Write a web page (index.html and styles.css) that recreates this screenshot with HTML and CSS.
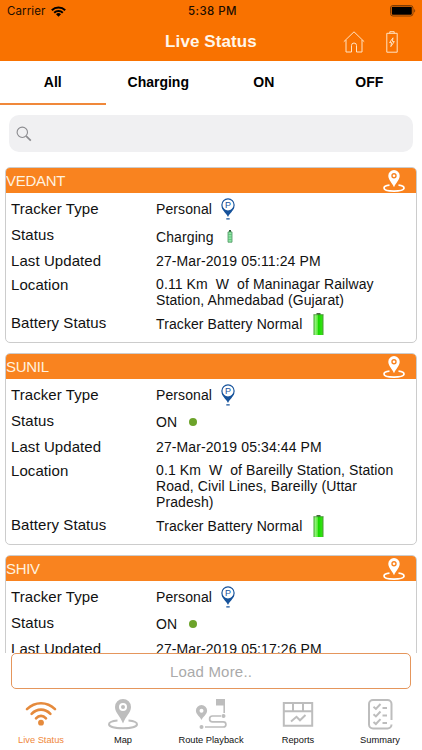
FILE: index.html
```html
<!DOCTYPE html>
<html lang="en">
<head>
    <meta charset="UTF-8">
    <meta name="viewport" content="width=device-width, initial-scale=1.0">
    <title>Live Status</title>
    <link rel="stylesheet" href="styles.css">
</head>
<body>
    <!-- Shared icons -->
    <svg class="sprite" aria-hidden="true">
        <symbol id="locate" viewBox="0 0 22 22">
            <path d="M6.500 15.200C3.200 15.500 1 16.600 1 18c0 1.900 4.300 3.100 10 3.100s10-1.200 10-3.100c0-1.400-2.200-2.500-5.500-2.800" fill="none" stroke="#fff" stroke-width="1.700"/>
            <path fill="#fff" fill-rule="evenodd" d="M11 0a5.700 5.700 0 0 0-5.700 5.700C5.300 9.800 9 12.500 11 17.200c2-4.700 5.700-7.400 5.700-11.500A5.700 5.700 0 0 0 11 0zm0 3a2.700 2.700 0 1 1 0 5.400A2.700 2.700 0 0 1 11 3z"/>
            <circle cx="11" cy="5.700" r="1.300" fill="#fff"/>
        </symbol>
        <symbol id="personal" viewBox="0 0 14 22">
            <path fill="#17539b" d="M.8 9.500C2 13.400 5 14.800 7 19c2-4.200 5-5.600 6.200-9.500z"/>
            <circle cx="7" cy="6.900" r="6.100" fill="#fff" stroke="#17539b" stroke-width="1.200"/>
            <path d="M5.300 20.900h3.400" stroke="#17539b" stroke-width="1.300"/>
        </symbol>
        <linearGradient id="green">
            <stop offset="0" stop-color="#3fa52c"/>
            <stop offset=".2" stop-color="#8df276"/>
            <stop offset=".4" stop-color="#5bea3b"/>
            <stop offset=".5" stop-color="#18d900"/>
            <stop offset=".8" stop-color="#30e011"/>
            <stop offset="1" stop-color="#4a9c34"/>
        </linearGradient>
        <symbol id="battery" viewBox="0 0 11 22">
            <path d="M3.500 0h4v2h-4z" fill="#4d6844"/>
            <path d="M.5 1.500h10V22H.5z" fill="url(#green)"/>
            <path d="M.5 1.700h10" stroke="#3a7a2d" stroke-width=".6"/>
        </symbol>
        <symbol id="charging" viewBox="0 0 6 13">
            <path d="M2 0h2v2H2z" fill="#315c3c"/>
            <path d="M1 1.900h4v10.300H1z" fill="#8de6a4" stroke="#4d9360" stroke-width=".8"/>
            <path d="M1.300 4.500h3.400M1.300 7h3.400M1.300 9.500h3.400" stroke="#4fae69" stroke-width=".6"/>
        </symbol>
    </svg>

    <div class="app">
        <header class="header">
            <div class="status-bar">
                <div class="carrier">
                    <span>Carrier</span>
                    <svg width="15" height="11" viewBox="0 0 15 11" fill="none" stroke="#000" stroke-width="2">
                        <path d="M.8 4.200a9.600 9.600 0 0 1 13.400 0M3.200 6.700a6.200 6.200 0 0 1 8.600 0"/>
                        <path fill="#000" stroke="none" d="M7.500 10.800 5 8.300a3.600 3.600 0 0 1 5 0z"/>
                    </svg>
                </div>
                <div class="time">5:38 PM</div>
                <svg class="phone-battery" width="26" height="12" viewBox="0 0 26 12">
                    <rect x=".5" y=".5" width="22.500" height="10.500" rx="2.500" fill="none" stroke="#7f3d05"/>
                    <rect x="1.800" y="1.800" width="20" height="7.900" rx="1" fill="#000"/>
                    <path d="M24.200 4c1.300.4 1.300 3.200 0 3.600z" fill="#7f3d05"/>
                </svg>
            </div>
            <div class="title-bar">
                <h1>Live Status</h1>
                <div class="actions">
                    <svg width="22" height="22" viewBox="0 0 22 22" fill="none" stroke="#ffe3c4" stroke-width="1">
                        <path d="M.8 10.700 11 .8l10.200 9.900M3 9v12h5.500v-6.500a2.500 2.500 0 0 1 5 0V21H19V9"/>
                    </svg>
                    <svg width="12" height="22" viewBox="0 0 12 22" fill="none" stroke="#ffe3c4" stroke-width="1">
                        <path d="M.8 2.300h10.400v18.900H.8zM3.800 2.300V.7h4.400v1.600M7 6.800l-3.400 4.800h2l-.8 4 3.500-5H6.400z"/>
                    </svg>
                </div>
            </div>
        </header>

        <nav class="tabs">
            <div class="tab active">All</div>
            <div class="tab">Charging</div>
            <div class="tab">ON</div>
            <div class="tab">OFF</div>
        </nav>

        <div class="search">
            <svg width="16" height="16" viewBox="0 0 16 16" fill="none" stroke="#8b8b8f">
                <circle cx="6.300" cy="6.300" r="5.200" stroke-width="1.100"/>
                <path d="m10.200 10.200 4.600 4.400" stroke-width="1.700"/>
            </svg>
        </div>

        <main class="list">
            <section class="card">
                <div class="card-header">
                    <span>VEDANT</span>
                    <svg width="22" height="22"><use href="#locate"/></svg>
                </div>
                <div class="row type">
                    <div class="label">Tracker Type</div>
                    <div class="value">Personal <div class="pin"><svg width="14" height="22"><use href="#personal"/></svg><span>P</span></div></div>
                </div>
                <div class="row status">
                    <div class="label">Status</div>
                    <div class="value">Charging <svg width="6" height="13"><use href="#charging"/></svg></div>
                </div>
                <div class="row updated">
                    <div class="label">Last Updated</div>
                    <div class="value">27-Mar-2019 05:11:24 PM</div>
                </div>
                <div class="row location">
                    <div class="label">Location</div>
                    <div class="value">0.11 Km&nbsp; W&nbsp; of Maninagar Railway<br>Station, Ahmedabad (Gujarat)</div>
                </div>
                <div class="row battery">
                    <div class="label">Battery Status</div>
                    <div class="value">Tracker Battery Normal <svg width="11" height="22"><use href="#battery"/></svg></div>
                </div>
            </section>

            <section class="card">
                <div class="card-header">
                    <span>SUNIL</span>
                    <svg width="22" height="22"><use href="#locate"/></svg>
                </div>
                <div class="row type">
                    <div class="label">Tracker Type</div>
                    <div class="value">Personal <div class="pin"><svg width="14" height="22"><use href="#personal"/></svg><span>P</span></div></div>
                </div>
                <div class="row status">
                    <div class="label">Status</div>
                    <div class="value on">ON <span class="dot"></span></div>
                </div>
                <div class="row updated">
                    <div class="label">Last Updated</div>
                    <div class="value">27-Mar-2019 05:34:44 PM</div>
                </div>
                <div class="row location">
                    <div class="label">Location</div>
                    <div class="value">0.1 Km&nbsp; W&nbsp; of Bareilly Station, Station<br>Road, Civil Lines, Bareilly (Uttar<br>Pradesh)</div>
                </div>
                <div class="row battery">
                    <div class="label">Battery Status</div>
                    <div class="value">Tracker Battery Normal <svg width="11" height="22"><use href="#battery"/></svg></div>
                </div>
            </section>

            <section class="card">
                <div class="card-header">
                    <span>SHIV</span>
                    <svg width="22" height="22"><use href="#locate"/></svg>
                </div>
                <div class="row type">
                    <div class="label">Tracker Type</div>
                    <div class="value">Personal <div class="pin"><svg width="14" height="22"><use href="#personal"/></svg><span>P</span></div></div>
                </div>
                <div class="row status">
                    <div class="label">Status</div>
                    <div class="value on">ON <span class="dot"></span></div>
                </div>
                <div class="row updated">
                    <div class="label">Last Updated</div>
                    <div class="value">27-Mar-2019 05:17:26 PM</div>
                </div>
            </section>
        </main>

        <button class="load-more">Load More..</button>

        <nav class="bottom-nav">
            <div class="nav-item active">
                <svg width="32" height="32" viewBox="0 0 32 32" fill="none" stroke="#e58a3c" stroke-width="2.600" stroke-linecap="round">
                    <path d="M2 11.200c8-8 20-8 28 0M6.600 15.800c5.400-5.600 13.400-5.600 18.800 0M11 20.300c3-3.300 7-3.300 10 0"/>
                    <circle cx="16" cy="24.700" r="2.900" fill="#e58a3c" stroke="none"/>
                </svg>
                <span>Live Status</span>
            </div>
            <div class="nav-item">
                <svg width="32" height="32" viewBox="0 0 32 32" fill="#bdbdbd">
                    <path d="M10.500 22.400C5 22.900 2 24.300 2 26.200c0 2.500 6 4 14 4s14-1.500 14-4c0-1.900-3-3.300-8.500-3.800" fill="none" stroke="#bdbdbd" stroke-width="2"/>
                    <path fill-rule="evenodd" d="M16 1a8 8 0 0 0-8 8c0 5.800 5.300 9 8 16.500C18.700 18 24 14.800 24 9a8 8 0 0 0-8-8zm0 3.900a4 4 0 1 1 0 8 4 4 0 0 1 0-8z"/>
                    <circle cx="16" cy="8.900" r="2"/>
                </svg>
                <span>Map</span>
            </div>
            <div class="nav-item">
                <svg width="32" height="32" viewBox="0 0 32 32" fill="#bdbdbd">
                    <path fill-rule="evenodd" d="M6.500 7A5.600 5.600 0 0 0 .9 12.600c0 4.100 4 5.800 5.600 9.400 1.600-3.600 5.600-5.300 5.600-9.400A5.600 5.600 0 0 0 6.500 7zm0 3.700a2 2 0 1 1 0 4 2 2 0 0 1 0-4z"/>
                    <path d="M21 1h9v14h-1.600V7.500H21z"/>
                    <circle cx="6.500" cy="29" r="2"/>
                    <circle cx="28.500" cy="18" r="2"/>
                    <path d="M10 29h18.300a2.500 2.500 0 0 0 0-5.200H17.500a2.900 2.900 0 0 1 0-5.800H26" fill="none" stroke="#bdbdbd" stroke-width="1.700"/>
                </svg>
                <span>Route Playback</span>
            </div>
            <div class="nav-item">
                <svg width="32" height="32" viewBox="0 0 32 32" fill="none" stroke="#bdbdbd" stroke-width="2">
                    <path d="M1.800 5h28.400v22.800H1.800zM1.800 13.300h28.400M11 5v8.300M21 5v8.300"/>
                    <path d="m9 23.500 5.500-4.700 3.500 3.500 5.500-5.200"/>
                </svg>
                <span>Reports</span>
            </div>
            <div class="nav-item">
                <svg width="32" height="32" viewBox="0 0 32 32" fill="none" stroke="#bdbdbd" stroke-width="2">
                    <path d="M27.500 22V6a4 4 0 0 0-4-4H9a4 4 0 0 0-4 4v20.500a4 4 0 0 0 4 4h14.500a4 4 0 0 0 4-4"/>
                    <path d="m9.500 8.800 2.400 2.100L16.500 6M9.500 16.300l2.400 2.100 4.600-4.900M9.500 23.900l2.400 2.100 4.600-4.900M18.500 10H23M18.500 17.500H23M18.500 25H23"/>
                </svg>
                <span>Summary</span>
            </div>
        </nav>
    </div>
</body>
</html>
```
FILE: styles.css
```css
* {
    box-sizing: border-box;
}

body {
    margin: 0;
    background-color: #fff;
    color: #111;
    font-family: "Liberation Sans", Arial, sans-serif;
}

svg {
    display: block;
    flex-shrink: 0;
}

.sprite {
    position: absolute;
    width: 0;
    height: 0;
}

.app {
    width: 422px;
    height: 750px;
    display: flex;
    flex-direction: column;
    overflow: hidden;
}

/* Header */
.header {
    height: 61px;
    flex-shrink: 0;
    background-color: #f97200;
}

.status-bar {
    height: 22px;
    padding: 0 6px 0 7px;
    display: grid;
    grid-template-columns: 1fr auto 1fr;
    align-items: center;
    font-family: Inter, sans-serif;
    font-size: 11.5px;
    color: #1c0d00;
}

.carrier {
    display: flex;
    align-items: center;
    gap: 6px;
    letter-spacing: 0.1px;
}

.time {
    padding-left: 2px;
    font-weight: 500;
    letter-spacing: 0.4px;
}

.phone-battery {
    justify-self: end;
}

.title-bar {
    height: 39px;
    padding: 0 24px;
    display: grid;
    grid-template-columns: 1fr auto 1fr;
    align-items: center;
}

h1 {
    grid-column: 2;
    margin: 0;
    font-size: 17px;
    letter-spacing: 0.1px;
    color: #fff6ea;
}

.actions {
    display: flex;
    justify-content: flex-end;
    gap: 21px;
}

/* Tabs */
.tabs {
    height: 44px;
    flex-shrink: 0;
    display: grid;
    grid-template-columns: repeat(4, 1fr);
}

.tab {
    padding-top: 13px;
    font-size: 14px;
    line-height: 17px;
    font-weight: bold;
    text-align: center;
    color: #000;
}

.tab.active {
    border-bottom: 2px solid #f0883a;
}

.search {
    height: 37px;
    flex-shrink: 0;
    margin: 10px 9px 0;
    padding: 0 7px;
    display: flex;
    align-items: center;
    background-color: #f0f0f2;
    border-radius: 10px;
}

/* Tracker cards */
.list {
    flex: 1;
    min-height: 0;
    padding: 15px 5px 0;
    overflow: hidden;
}

.card {
    margin-bottom: 10px;
    padding-bottom: 2px;
    border: 1px solid #ccc;
    border-radius: 5px;
    overflow: hidden;
}

.card-header {
    height: 25px;
    padding-right: 11px;
    display: flex;
    align-items: center;
    justify-content: space-between;
    background-color: #f9831f;
    color: #fff1df;
    font-size: 15px;
    letter-spacing: -0.3px;
}

.row {
    padding-left: 5px;
    display: grid;
    grid-template-columns: 145px 1fr;
    align-items: center;
}

.label {
    font-size: 15px;
    line-height: 18px;
    letter-spacing: 0.08px;
}

.value {
    display: flex;
    align-items: center;
    font-size: 14px;
    line-height: 16px;
    letter-spacing: 0.1px;
}

.type {
    height: 31px;
}

.type .value {
    gap: 9px;
}

/* Letter inside the tracker type pin */
.pin {
    position: relative;
}

.pin span {
    position: absolute;
    top: 2px;
    left: 0;
    width: 14px;
    font-size: 9px;
    line-height: 10px;
    text-align: center;
    color: #17539b;
}

.status {
    height: 25px;
}

.status .label {
    padding-bottom: 4px;
}

.status .value {
    gap: 13px;
}

.status .on {
    gap: 12px;
    padding-bottom: 2px;
}

.dot {
    width: 8px;
    height: 8px;
    border-radius: 50%;
    background-color: #6ca32a;
}

.updated {
    height: 24px;
}

.location {
    padding-top: 3px;
    align-items: start;
}

.battery {
    height: 32px;
}

.battery .label {
    padding-bottom: 3px;
}

.battery .value {
    gap: 11px;
}

.load-more {
    height: 36px;
    flex-shrink: 0;
    margin: 0 11px;
    background-color: #fff;
    border: 1px solid #e5965c;
    border-radius: 5px;
    font-family: inherit;
    font-size: 15px;
    letter-spacing: 0.2px;
    color: #aaa;
}

/* Bottom navigation */
.bottom-nav {
    height: 61px;
    flex-shrink: 0;
    padding-top: 9px;
    display: grid;
    grid-template-columns: 82px 82px 94px 80px 84px;
}

.nav-item {
    display: flex;
    flex-direction: column;
    align-items: center;
    gap: 4px;
    font-size: 9.3px;
    line-height: 12px;
    white-space: nowrap;
}

.nav-item.active {
    color: #f0883a;
}
```
